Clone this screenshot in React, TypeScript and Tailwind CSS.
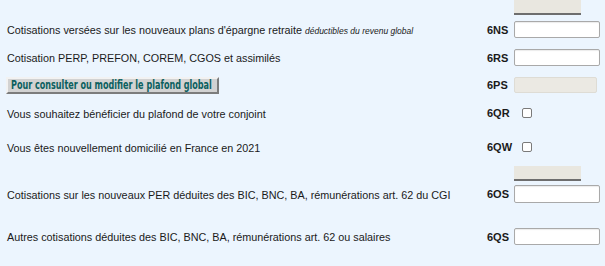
import React from 'react';

type Field = 'input' | 'disabled' | 'checkbox' | 'bar';

interface Row {
  code?: string;
  field: Field;
  mt: string;
  h: string;
  label?: React.ReactNode;
}

const rows: Row[] = [
  { field: 'bar', mt: 'mt-0', h: 'h-[15px]' },
  {
    code: '6NS',
    field: 'input',
    mt: 'mt-[6px]',
    h: 'h-[17px]',
    label: (
      <>
        Cotisations versées sur les nouveaux plans d'épargne retraite{' '}
        <span className="italic text-[8.5px]">déductibles du revenu global</span>
      </>
    ),
  },
  { code: '6RS', field: 'input', mt: 'mt-[11px]', h: 'h-[17px]', label: 'Cotisation PERP, PREFON, COREM, CGOS et assimilés' },
  { code: '6PS', field: 'disabled', mt: 'mt-[11px]', h: 'h-[16px]', label: 'button' },
  { code: '6QR', field: 'checkbox', mt: 'mt-[12px]', h: 'h-[16px]', label: 'Vous souhaitez bénéficier du plafond de votre conjoint' },
  { code: '6QW', field: 'checkbox', mt: 'mt-[18px]', h: 'h-[16px]', label: 'Vous êtes nouvellement domicilié en France en 2021' },
  { field: 'bar', mt: 'mt-[11px]', h: 'h-[15px]' },
  {
    code: '6OS',
    field: 'input',
    mt: 'mt-[4px]',
    h: 'h-[18px]',
    label: 'Cotisations sur les nouveaux PER déduites des BIC, BNC, BA, rémunérations art. 62 du CGI',
  },
  {
    code: '6QS',
    field: 'input',
    mt: 'mt-[25px]',
    h: 'h-[17px]',
    label: 'Autres cotisations déduites des BIC, BNC, BA, rémunérations art. 62 ou salaires',
  },
];

function FieldBox({ field, h }: { field: Field; h: string }) {
  if (field === 'bar') {
    return <div className={`w-[67px] ${h} bg-[#e9e7e0] border-b-2 border-[#6e6e6e]`} />;
  }
  if (field === 'disabled') {
    return <div className={`w-[83px] ${h} bg-[#ebe9e3] border border-[#dedcd5] rounded-[2px]`} />;
  }
  if (field === 'checkbox') {
    return (
      <div className="pl-[8px]">
        <div className="w-[10px] h-[10px] bg-white border border-[#7a7a7a] rounded-[2px]" />
      </div>
    );
  }
  return (
    <input
      type="text"
      className={`w-[86px] ${h} bg-white border border-[#a9a9a9] rounded-[2px] shadow-[inset_0_1px_1px_rgba(0,0,0,0.08)] outline-none`}
    />
  );
}

export default function App() {
  return (
    <div className="min-h-screen w-full bg-[#ecf5fe] text-[10.8px] text-[#1a1a1a] font-['Liberation_Sans',Arial,sans-serif] overflow-hidden">
      <div className="flex flex-col pr-[5px]">
        {rows.map((row, i) => (
          <div key={i} className={`flex items-center ${row.mt} ${row.h}`}>
            <div className="flex-1 min-w-0 pl-[7px] whitespace-nowrap">
              {row.label === 'button' ? (
                <button className="-ml-[1px] w-[213px] h-[17px] flex items-center overflow-hidden pl-[3px] bg-[#d2d2d2] border-2 border-t-[#f2f2f2] border-l-[#f2f2f2] border-b-[#7c7c7c] border-r-[#7c7c7c] text-[#0b5f5f] font-bold text-[13px] leading-none font-['DejaVu_Sans_Condensed','DejaVu_Sans',sans-serif]">
                  <span className="inline-block origin-left scale-x-[0.69] whitespace-nowrap -mt-[1px]">
                    Pour consulter ou modifier le plafond global
                  </span>
                </button>
              ) : (
                <span className="relative top-[1px]">{row.label}</span>
              )}
            </div>
            <div className="w-[27px] font-bold text-[11px] pt-[1px]">{row.code}</div>
            <div className="w-[86px] flex items-center">
              <FieldBox field={row.field} h={row.h} />
            </div>
          </div>
        ))}
      </div>
    </div>
  );
}
